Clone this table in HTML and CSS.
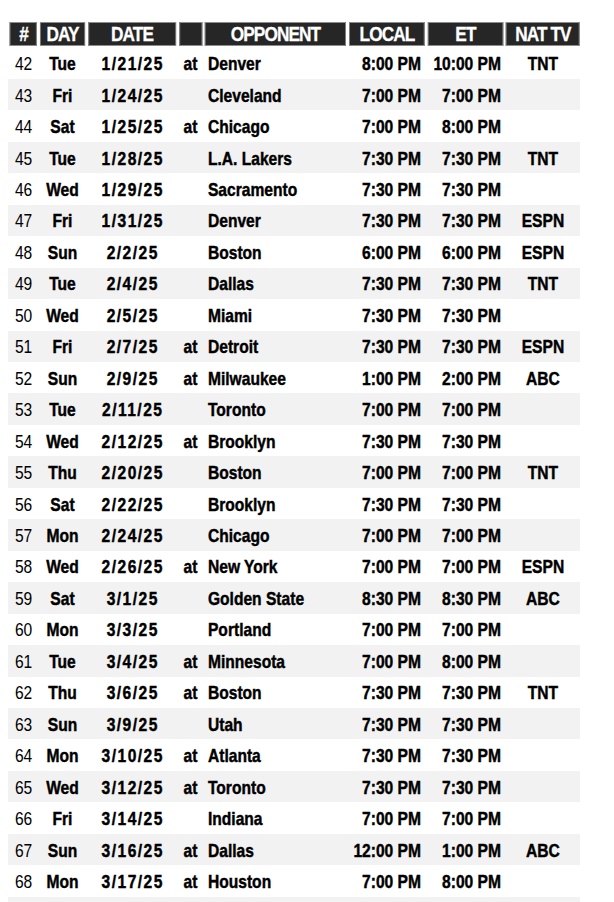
FILE: index.html
```html
<!DOCTYPE html>
<html>
<head>
<meta charset="utf-8">
<link rel="stylesheet" href="styles.css">
</head>
<body>
<div class="frame">
<div class="sched">
  <div class="head">
    <div class="hc">#</div><div class="hc">DAY</div><div class="hc">DATE</div><div class="hc"></div><div class="hc">OPPONENT</div><div class="hc">LOCAL</div><div class="hc">ET</div><div class="hc">NAT TV</div>
  </div>
  <div class="row"><span class="num">42</span><span class="day">Tue</span><span class="date">1/21/25</span><span class="at">at</span><span class="opp">Denver</span><span class="loc">8:00 PM</span><span class="et">10:00 PM</span><span class="tv">TNT</span></div>
  <div class="row alt"><span class="num">43</span><span class="day">Fri</span><span class="date">1/24/25</span><span class="at"></span><span class="opp">Cleveland</span><span class="loc">7:00 PM</span><span class="et">7:00 PM</span><span class="tv"></span></div>
  <div class="row"><span class="num">44</span><span class="day">Sat</span><span class="date">1/25/25</span><span class="at">at</span><span class="opp">Chicago</span><span class="loc">7:00 PM</span><span class="et">8:00 PM</span><span class="tv"></span></div>
  <div class="row alt"><span class="num">45</span><span class="day">Tue</span><span class="date">1/28/25</span><span class="at"></span><span class="opp">L.A. Lakers</span><span class="loc">7:30 PM</span><span class="et">7:30 PM</span><span class="tv">TNT</span></div>
  <div class="row"><span class="num">46</span><span class="day">Wed</span><span class="date">1/29/25</span><span class="at"></span><span class="opp">Sacramento</span><span class="loc">7:30 PM</span><span class="et">7:30 PM</span><span class="tv"></span></div>
  <div class="row alt"><span class="num">47</span><span class="day">Fri</span><span class="date">1/31/25</span><span class="at"></span><span class="opp">Denver</span><span class="loc">7:30 PM</span><span class="et">7:30 PM</span><span class="tv">ESPN</span></div>
  <div class="row"><span class="num">48</span><span class="day">Sun</span><span class="date">2/2/25</span><span class="at"></span><span class="opp">Boston</span><span class="loc">6:00 PM</span><span class="et">6:00 PM</span><span class="tv">ESPN</span></div>
  <div class="row alt"><span class="num">49</span><span class="day">Tue</span><span class="date">2/4/25</span><span class="at"></span><span class="opp">Dallas</span><span class="loc">7:30 PM</span><span class="et">7:30 PM</span><span class="tv">TNT</span></div>
  <div class="row"><span class="num">50</span><span class="day">Wed</span><span class="date">2/5/25</span><span class="at"></span><span class="opp">Miami</span><span class="loc">7:30 PM</span><span class="et">7:30 PM</span><span class="tv"></span></div>
  <div class="row alt"><span class="num">51</span><span class="day">Fri</span><span class="date">2/7/25</span><span class="at">at</span><span class="opp">Detroit</span><span class="loc">7:30 PM</span><span class="et">7:30 PM</span><span class="tv">ESPN</span></div>
  <div class="row"><span class="num">52</span><span class="day">Sun</span><span class="date">2/9/25</span><span class="at">at</span><span class="opp">Milwaukee</span><span class="loc">1:00 PM</span><span class="et">2:00 PM</span><span class="tv">ABC</span></div>
  <div class="row alt"><span class="num">53</span><span class="day">Tue</span><span class="date">2/11/25</span><span class="at"></span><span class="opp">Toronto</span><span class="loc">7:00 PM</span><span class="et">7:00 PM</span><span class="tv"></span></div>
  <div class="row"><span class="num">54</span><span class="day">Wed</span><span class="date">2/12/25</span><span class="at">at</span><span class="opp">Brooklyn</span><span class="loc">7:30 PM</span><span class="et">7:30 PM</span><span class="tv"></span></div>
  <div class="row alt"><span class="num">55</span><span class="day">Thu</span><span class="date">2/20/25</span><span class="at"></span><span class="opp">Boston</span><span class="loc">7:00 PM</span><span class="et">7:00 PM</span><span class="tv">TNT</span></div>
  <div class="row"><span class="num">56</span><span class="day">Sat</span><span class="date">2/22/25</span><span class="at"></span><span class="opp">Brooklyn</span><span class="loc">7:30 PM</span><span class="et">7:30 PM</span><span class="tv"></span></div>
  <div class="row alt"><span class="num">57</span><span class="day">Mon</span><span class="date">2/24/25</span><span class="at"></span><span class="opp">Chicago</span><span class="loc">7:00 PM</span><span class="et">7:00 PM</span><span class="tv"></span></div>
  <div class="row"><span class="num">58</span><span class="day">Wed</span><span class="date">2/26/25</span><span class="at">at</span><span class="opp">New York</span><span class="loc">7:00 PM</span><span class="et">7:00 PM</span><span class="tv">ESPN</span></div>
  <div class="row alt"><span class="num">59</span><span class="day">Sat</span><span class="date">3/1/25</span><span class="at"></span><span class="opp">Golden State</span><span class="loc">8:30 PM</span><span class="et">8:30 PM</span><span class="tv">ABC</span></div>
  <div class="row"><span class="num">60</span><span class="day">Mon</span><span class="date">3/3/25</span><span class="at"></span><span class="opp">Portland</span><span class="loc">7:00 PM</span><span class="et">7:00 PM</span><span class="tv"></span></div>
  <div class="row alt"><span class="num">61</span><span class="day">Tue</span><span class="date">3/4/25</span><span class="at">at</span><span class="opp">Minnesota</span><span class="loc">7:00 PM</span><span class="et">8:00 PM</span><span class="tv"></span></div>
  <div class="row"><span class="num">62</span><span class="day">Thu</span><span class="date">3/6/25</span><span class="at">at</span><span class="opp">Boston</span><span class="loc">7:30 PM</span><span class="et">7:30 PM</span><span class="tv">TNT</span></div>
  <div class="row alt"><span class="num">63</span><span class="day">Sun</span><span class="date">3/9/25</span><span class="at"></span><span class="opp">Utah</span><span class="loc">7:30 PM</span><span class="et">7:30 PM</span><span class="tv"></span></div>
  <div class="row"><span class="num">64</span><span class="day">Mon</span><span class="date">3/10/25</span><span class="at">at</span><span class="opp">Atlanta</span><span class="loc">7:30 PM</span><span class="et">7:30 PM</span><span class="tv"></span></div>
  <div class="row alt"><span class="num">65</span><span class="day">Wed</span><span class="date">3/12/25</span><span class="at">at</span><span class="opp">Toronto</span><span class="loc">7:30 PM</span><span class="et">7:30 PM</span><span class="tv"></span></div>
  <div class="row"><span class="num">66</span><span class="day">Fri</span><span class="date">3/14/25</span><span class="at"></span><span class="opp">Indiana</span><span class="loc">7:00 PM</span><span class="et">7:00 PM</span><span class="tv"></span></div>
  <div class="row alt"><span class="num">67</span><span class="day">Sun</span><span class="date">3/16/25</span><span class="at">at</span><span class="opp">Dallas</span><span class="loc">12:00 PM</span><span class="et">1:00 PM</span><span class="tv">ABC</span></div>
  <div class="row"><span class="num">68</span><span class="day">Mon</span><span class="date">3/17/25</span><span class="at">at</span><span class="opp">Houston</span><span class="loc">7:00 PM</span><span class="et">8:00 PM</span><span class="tv"></span></div>
  <div class="row alt"><span class="num"></span><span class="day"></span><span class="date"></span><span class="at"></span><span class="opp"></span><span class="loc"></span><span class="et"></span><span class="tv"></span></div>
</div>
</div>
</body>
</html>
```
FILE: styles.css
```css
html, body {
  margin: 0;
  padding: 0;
  background: #ffffff;
}
body {
  font-family: "Liberation Sans", Arial, sans-serif;
  color: #000;
  overflow: hidden;
}
.frame {
  width: 572px;
  height: 902px;
  margin-left: 8px;
  overflow: hidden;
}
/* The table is drawn at 1/0.82 width and condensed horizontally,
   emulating a narrow (Arial Narrow-like) typeface. */
.sched {
  width: 697.56px;
  padding-top: 22px;
  transform: scaleX(0.82);
  transform-origin: 0 0;
}
.head, .row {
  display: grid;
  grid-template-columns: 32.93px 54.88px 107.32px 28.05px 171.95px 92.68px 91.46px 90.24px;
  column-gap: 3.66px;
  padding-left: 2.44px;
  box-sizing: border-box;
}
.head {
  height: 23.5px;
  margin-bottom: 2px;
}
.hc {
  background: #262626;
  border: 1px solid #8c8c8c;
  box-sizing: border-box;
  color: #fff;
  font-weight: bold;
  font-size: 21px;
  letter-spacing: -1.1px;
  line-height: 22px;
  text-align: center;
  white-space: nowrap;
  -webkit-text-stroke: 0.3px #fff;
}
.row {
  height: 31.46px;
  align-items: center;
  font-size: 19px;
  font-weight: bold;
  line-height: 20px;
  white-space: nowrap;
  -webkit-text-stroke: 0.45px #000;
}
.row span {
  padding-top: 2px;
}
.alt {
  background: #f2f2f2;
}
.row .num {
  font-weight: normal;
  padding-left: 6px;
  -webkit-text-stroke: 0;
}
.day, .date, .at, .tv {
  text-align: center;
}
.date {
  letter-spacing: 1.8px;
  text-indent: 1.8px;
}
.opp {
  padding-left: 3.66px;
}
.loc {
  text-align: right;
  padding-right: 4.9px;
}
.et {
  text-align: right;
  padding-right: 2.44px;
}
```
